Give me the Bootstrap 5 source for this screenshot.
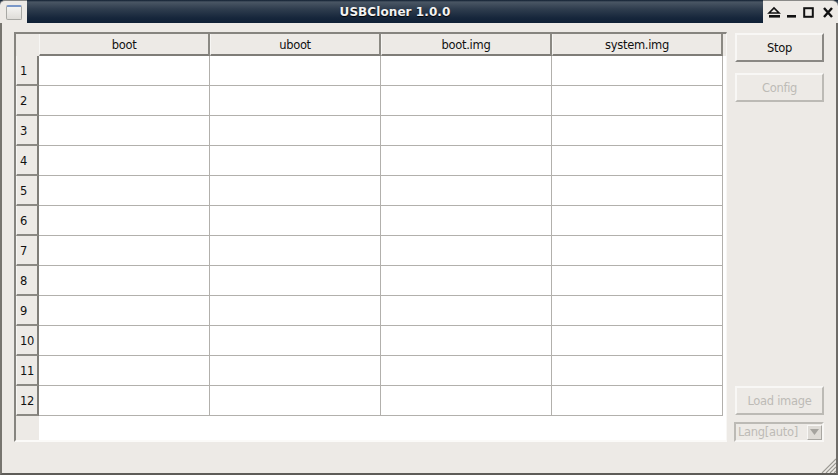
<!DOCTYPE html>
<html><head><meta charset="utf-8">
<link href="https://cdn.jsdelivr.net/npm/bootstrap@5.3.0/dist/css/bootstrap.min.css" rel="stylesheet">
<style>
html,body{margin:0;height:475px;overflow:hidden;background:#edeae6}
body{font-family:"DejaVu Sans",sans-serif;font-size:11.5px;line-height:1;color:#111;letter-spacing:-.3px}
.win{width:838px;height:475px;border-left:2px solid #77756f;border-right:2px solid #6e6c68;border-bottom:2px solid #5e5c58;border-top:0;border-radius:6px 6px 0 0;background:#edeae6;position:relative;box-sizing:border-box}
.tbar{height:23px;margin-left:-2px;margin-right:-2px;background:linear-gradient(#0f1d2f 0,#4a5664 2px,#2f3d4e 9px,#16263b 18px,#0f2036 23px);flex:none}
.tleft{width:27px;background:#edeae6;border-radius:5px 0 0 0;flex:none;border-top:1px solid #8a8a88}
.tright{width:75px;background:#edeae6;border-radius:0 6px 0 0;flex:none;border-top:1px solid #8a8a88}
.ttitle{color:#f2f2f2;font-weight:700;font-size:12px;letter-spacing:.08px;text-shadow:0 1px 1px #000}
.appicon{width:16px;height:15px;border:1px solid #a8a8a4;border-radius:2px;background:linear-gradient(#f4f3f1,#dedcd8);border-top:2px solid #7a97c8}
.main{height:450px}
.frame{margin:9px 0 0 12px;width:713px;height:410px;border-left:2px solid #86847f;border-top:2px solid #86847f;background:#fff;border-right:1px solid #f8f7f5;border-bottom:2px solid #fbfaf8;flex:none}
.hrow{height:22px;background:#edeae6;flex:none}
.corner{width:23px;flex:none}
.hcell{width:171px;flex:none;border-right:2px solid #8b8983;border-bottom:2px solid #7f7d78;border-left:1px solid #f7f6f4;padding-top:3px;color:#111}
.drow{height:30px;flex:none}
.rowh{width:23px;flex:none;background:#edeae6;border-right:2px solid #7f7d78;border-bottom:2px solid #8b8983;padding-left:3px;padding-top:4px;border-left:1px solid #f7f6f4}
.dcell{width:171px;flex:none;border-right:1px solid #b2b0ac;border-bottom:1px solid #b2b0ac;background:#fff}
.restleft{width:23px;background:#edeae6;flex:none}
.side{margin:10px 0 0 8px;width:89px;height:409px}
.qbtn{height:29px;width:89px;background:#edeae6;border:2px solid;border-color:#f8f7f5 #8a8884 #8a8884 #f8f7f5;border-radius:0;padding:2px 0 0;font-size:11.5px;letter-spacing:-.3px;line-height:1;color:#111;flex:none}
.qbtn:disabled{color:#bdbbb6;border-color:#f8f7f5 #bcbab5 #bcbab5 #f8f7f5;background:#edeae6;opacity:1}
.gapa{margin-bottom:11px}
.lang{height:20px;width:90px;border:2px solid;border-color:#bcbab5 #f8f7f5 #f8f7f5 #bcbab5;color:#bdbbb6;padding-left:2px;font-size:11.5px;margin:7px 0 0 -1px;flex:none}
.langtxt{padding-top:2px}
.larrow{width:15px;height:15px;background:#dedbd6;margin-left:auto;margin-right:0;border:1px solid;border-color:#f8f7f5 #a9a7a2 #a9a7a2 #f8f7f5}
.grip{position:absolute;right:0;bottom:0}
</style></head><body>
<div class="win d-flex flex-column">
<div class="tbar d-flex align-items-stretch">
 <div class="tleft d-flex align-items-center justify-content-center"><div class="appicon"></div></div>
 <div class="ttitle flex-grow-1 d-flex align-items-center justify-content-center">USBCloner 1.0.0</div>
 <div class="tright d-flex align-items-center justify-content-center">
  <svg width="75" height="22" viewBox="0 0 75 22"><path d="M6 12 L11 7 L16 12Z" fill="none" stroke="#111" stroke-width="1.6"/><rect x="6" y="14" width="11" height="2.6" fill="#111"/><rect x="24" y="14" width="9" height="2.6" fill="#111"/><rect x="41.2" y="7.2" width="8.6" height="8.6" fill="none" stroke="#111" stroke-width="2"/><path d="M61 7 L69 16 M69 7 L61 16" stroke="#111" stroke-width="2.4"/></svg>
 </div>
</div>
<div class="main d-flex">
 <div class="frame d-flex flex-column">
  <div class="hrow d-flex">
   <div class="corner"></div>
   <div class="hcell d-flex align-items-center justify-content-center">boot</div>
   <div class="hcell d-flex align-items-center justify-content-center">uboot</div>
   <div class="hcell d-flex align-items-center justify-content-center">boot.img</div>
   <div class="hcell d-flex align-items-center justify-content-center">system.img</div>
  </div>
  <div class="drow d-flex"><div class="rowh d-flex align-items-center">1</div><div class="dcell"></div><div class="dcell"></div><div class="dcell"></div><div class="dcell"></div></div>
  <div class="drow d-flex"><div class="rowh d-flex align-items-center">2</div><div class="dcell"></div><div class="dcell"></div><div class="dcell"></div><div class="dcell"></div></div>
  <div class="drow d-flex"><div class="rowh d-flex align-items-center">3</div><div class="dcell"></div><div class="dcell"></div><div class="dcell"></div><div class="dcell"></div></div>
  <div class="drow d-flex"><div class="rowh d-flex align-items-center">4</div><div class="dcell"></div><div class="dcell"></div><div class="dcell"></div><div class="dcell"></div></div>
  <div class="drow d-flex"><div class="rowh d-flex align-items-center">5</div><div class="dcell"></div><div class="dcell"></div><div class="dcell"></div><div class="dcell"></div></div>
  <div class="drow d-flex"><div class="rowh d-flex align-items-center">6</div><div class="dcell"></div><div class="dcell"></div><div class="dcell"></div><div class="dcell"></div></div>
  <div class="drow d-flex"><div class="rowh d-flex align-items-center">7</div><div class="dcell"></div><div class="dcell"></div><div class="dcell"></div><div class="dcell"></div></div>
  <div class="drow d-flex"><div class="rowh d-flex align-items-center">8</div><div class="dcell"></div><div class="dcell"></div><div class="dcell"></div><div class="dcell"></div></div>
  <div class="drow d-flex"><div class="rowh d-flex align-items-center">9</div><div class="dcell"></div><div class="dcell"></div><div class="dcell"></div><div class="dcell"></div></div>
  <div class="drow d-flex"><div class="rowh d-flex align-items-center">10</div><div class="dcell"></div><div class="dcell"></div><div class="dcell"></div><div class="dcell"></div></div>
  <div class="drow d-flex"><div class="rowh d-flex align-items-center">11</div><div class="dcell"></div><div class="dcell"></div><div class="dcell"></div><div class="dcell"></div></div>
  <div class="drow d-flex"><div class="rowh d-flex align-items-center">12</div><div class="dcell"></div><div class="dcell"></div><div class="dcell"></div><div class="dcell"></div></div>
  <div class="d-flex flex-grow-1"><div class="restleft"></div></div>
 </div>
 <div class="side d-flex flex-column">
  <button class="qbtn gapa btn" type="button">Stop</button>
  <button class="qbtn btn" type="button" disabled>Config</button>
  <button class="qbtn btn mt-auto" type="button" disabled>Load image</button>
  <div class="lang d-flex align-items-center"><span class="langtxt">Lang[auto]</span><span class="larrow d-flex align-items-center justify-content-center"><svg width="9" height="6" viewBox="0 0 9 6"><path d="M0 0H9L4.5 6Z" fill="#a5a39e"/></svg></span></div>
 </div>
</div>
<svg class="grip" width="15" height="15" viewBox="0 0 15 15"><path d="M15 1 L1 15 M15 5 L5 15 M15 9 L9 15 M15 13 L13 15" stroke="#9a9892" stroke-width="1.1"/></svg>
</div>
</body></html>
